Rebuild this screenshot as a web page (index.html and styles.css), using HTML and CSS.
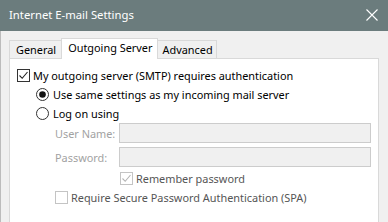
FILE: index.html
```html
<!DOCTYPE html>
<html>
<head>
<meta charset="utf-8">
<link rel="stylesheet" href="styles.css">
</head>
<body>
<div class="window">
  <div class="titlebar">
    <span class="title">Internet E-mail Settings</span>
    <svg class="close" width="12" height="12" viewBox="0 0 12 12"><path d="M0.5 0.5 L11.5 11.5 M11.5 0.5 L0.5 11.5" stroke="#ffffff" stroke-width="1.1" fill="none"/></svg>
  </div>
  <div class="content">
    <div class="tabs">
      <div class="tab first">General</div>
      <div class="tab active">Outgoing Server</div>
      <div class="tab last">Advanced</div>
    </div>
    <div class="panel">
      <div class="row">
        <svg class="box" width="13" height="13" viewBox="0 0 13 13"><rect x="0.5" y="0.5" width="12" height="12" fill="#fff" stroke="#333"/><path d="M2.5 6.5 L5.2 9.3 L10.5 3" stroke="#222" stroke-width="1.1" fill="none"/></svg>
        <span class="text">My outgoing server (SMTP) requires authentication</span>
      </div>
      <div class="row indent1">
        <svg class="radio" width="13" height="13" viewBox="0 0 13 13"><circle cx="6.5" cy="6.5" r="6" fill="#fff" stroke="#333"/><circle cx="6.5" cy="6.5" r="3.3" fill="#111"/></svg>
        <span class="text">Use same settings as my incoming mail server</span>
      </div>
      <div class="row indent1">
        <svg class="radio" width="13" height="13" viewBox="0 0 13 13"><circle cx="6.5" cy="6.5" r="6" fill="#fff" stroke="#333"/></svg>
        <span class="text">Log on using</span>
      </div>
      <div class="field indent2">
        <span class="label">User Name:</span>
        <div class="input"></div>
      </div>
      <div class="field indent2 second">
        <span class="label">Password:</span>
        <div class="input"></div>
      </div>
      <div class="row remember">
        <svg class="box" width="13" height="13" viewBox="0 0 13 13"><rect x="0.5" y="0.5" width="12" height="12" fill="#fff" stroke="#c4c4c4"/><path d="M2.5 6.5 L5.2 9.3 L10.5 3" stroke="#b4b4b4" stroke-width="1.1" fill="none"/></svg>
        <span class="text dim">Remember password</span>
      </div>
      <div class="row indent2">
        <svg class="box" width="13" height="13" viewBox="0 0 13 13"><rect x="0.5" y="0.5" width="12" height="12" fill="#fff" stroke="#c4c4c4"/></svg>
        <span class="text dim">Require Secure Password Authentication (SPA)</span>
      </div>
    </div>
  </div>
</div>
</body>
</html>
```

FILE: styles.css
```css
html, body {
  margin: 0;
  padding: 0;
}
body {
  width: 388px;
  height: 222px;
  overflow: hidden;
  font-family: "Noto Sans", "Open Sans", sans-serif;
  font-size: 10.9px;
  color: #000;
}
.window {
  width: 388px;
  height: 222px;
  display: flex;
  flex-direction: column;
  background: #f0f0f0;
  overflow: hidden;
}
.titlebar {
  height: 31px;
  flex: none;
  background: #6b7c7d;
  display: flex;
  align-items: center;
  justify-content: space-between;
  padding: 0 10px 0 9px;
  color: #fff;
}
.title {
  font-size: 11.3px;
  line-height: 16px;
  margin-top: -1px;
}
.close {
  display: block;
  margin-top: -1px;
}
.content {
  flex: 1;
  display: flex;
  flex-direction: column;
  padding: 7px 9px 0 8px;
  border-left: 1px solid #bcbcbc;
}
.tabs {
  display: flex;
  align-items: flex-end;
  height: 20px;
  position: relative;
  z-index: 2;
}
.tab {
  height: 18px;
  box-sizing: border-box;
  border: 1px solid #d9d9d9;
  border-bottom: none;
  background: #f0f0f0;
  padding: 0 5px 0 6px;
  line-height: 17px;
  margin-right: -1px;
}
.tab.last {
  padding: 0 3px 0 4px;
}
.tab.active {
  height: 21px;
  background: #fff;
  margin-bottom: -1px;
  padding: 0 5px 0 6px;
  line-height: 17px;
  position: relative;
  z-index: 3;
}
.panel {
  flex: 1;
  min-height: 180px;
  background: #fff;
  border: 1px solid #d9d9d9;
  display: flex;
  flex-direction: column;
  padding: 7px 0 0 7px;
}
.row {
  height: 19px;
  display: flex;
  align-items: center;
}
.row .box {
  margin-right: 3px;
  flex: none;
}
.row .radio {
  margin-right: 4px;
  flex: none;
}
.indent1 {
  padding-left: 19px;
}
.indent2 {
  padding-left: 38px;
}
.field {
  display: flex;
  align-items: center;
  height: 20px;
}
.field.second {
  margin-top: 4px;
}
.label {
  width: 64px;
  flex: none;
  color: #a2a2a2;
}
.input {
  width: 252px;
  height: 20px;
  box-sizing: border-box;
  background: #f0f0f0;
  border: 1px solid #cccccc;
}
.remember {
  padding-left: 103px;
  margin-top: 1px;
  height: 20px;
}
.dim {
  color: #555;
}
```
